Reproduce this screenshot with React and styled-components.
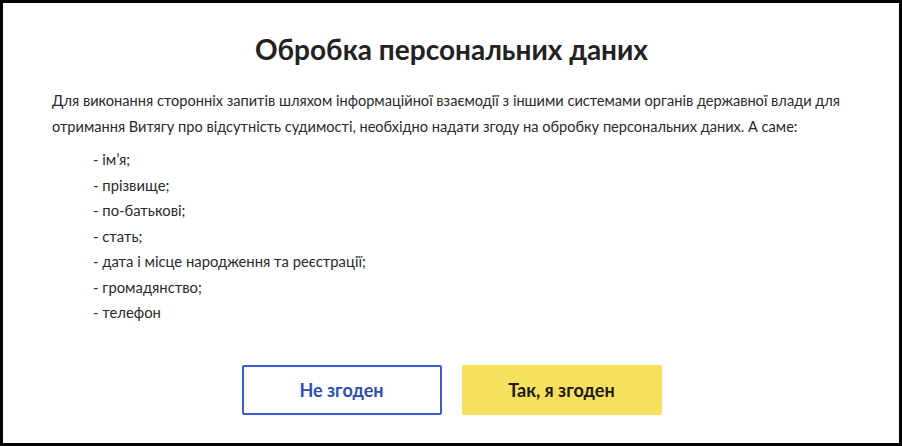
import React from "react";
import styled, { createGlobalStyle } from "styled-components";

const GlobalStyle = createGlobalStyle`
    html, body {
        margin: 0;
        padding: 0;
        background: #ffffff;
    }
    body {
        font-family: Lato, "Noto Sans", sans-serif;
        color: #1d1d1d;
    }
`

const items = [
    "ім’я;",
    "прізвище;",
    "по-батькові;",
    "стать;",
    "дата і місце народження та реєстрації;",
    "громадянство;",
    "телефон",
]

const ConsentModal = () => {
    return (
        <Frame>
            <Title>Обробка персональних даних</Title>
            <Text>
                Для виконання сторонніх запитів шляхом інформаційної взаємодії з іншими системами органів державної влади для
                отримання Витягу про відсутність судимості, необхідно надати згоду на обробку персональних даних. А саме:
            </Text>
            <List>
                {items.map((item) => (
                    <li key={item}>- {item}</li>
                ))}
            </List>
            <Actions>
                <Button variant="outline">Не згоден</Button>
                <Button variant="primary">Так, я згоден</Button>
            </Actions>
        </Frame>
    )
}

const Frame = styled.section`
    box-sizing: border-box;
    width: 902px;
    height: 446px;
    border: 3px solid #000;
    padding: 26px 48px 0 49px;
    display: flex;
    flex-direction: column;
`

const Title = styled.h1`
    margin: 0;
    text-align: center;
    font-size: 28px;
    line-height: 40px;
    font-weight: 700;
    color: #222;
`

const Text = styled.p`
    margin: 19px 0 0;
    font-size: 14.6px;
    line-height: 25.5px;
    color: #2a2a2a;
`

const List = styled.ul`
    list-style: none;
    margin: 8px 0 0;
    padding: 0 0 0 41px;
    font-size: 14.8px;
    line-height: 25.5px;
    color: #2a2a2a;
`

const Actions = styled.div`
    display: flex;
    justify-content: center;
    gap: 20px;
    margin-top: 39px;
`

const Button = styled.button`
    box-sizing: border-box;
    width: 200px;
    height: 50px;
    border-radius: 2px;
    font-family: Lato, "Noto Sans", sans-serif;
    font-size: 18px;
    font-weight: 700;
    cursor: pointer;
    border: 2px solid ${(p) => (p.variant === "outline" ? "#3b5ec2" : "#f6e05e")};
    background: ${(p) => (p.variant === "outline" ? "#fff" : "#f6e05e")};
    color: ${(p) => (p.variant === "outline" ? "#2d4eb2" : "#1a1a1a")};
`

const App = () => (
    <>
        <GlobalStyle />
        <ConsentModal />
    </>
)

export default App
